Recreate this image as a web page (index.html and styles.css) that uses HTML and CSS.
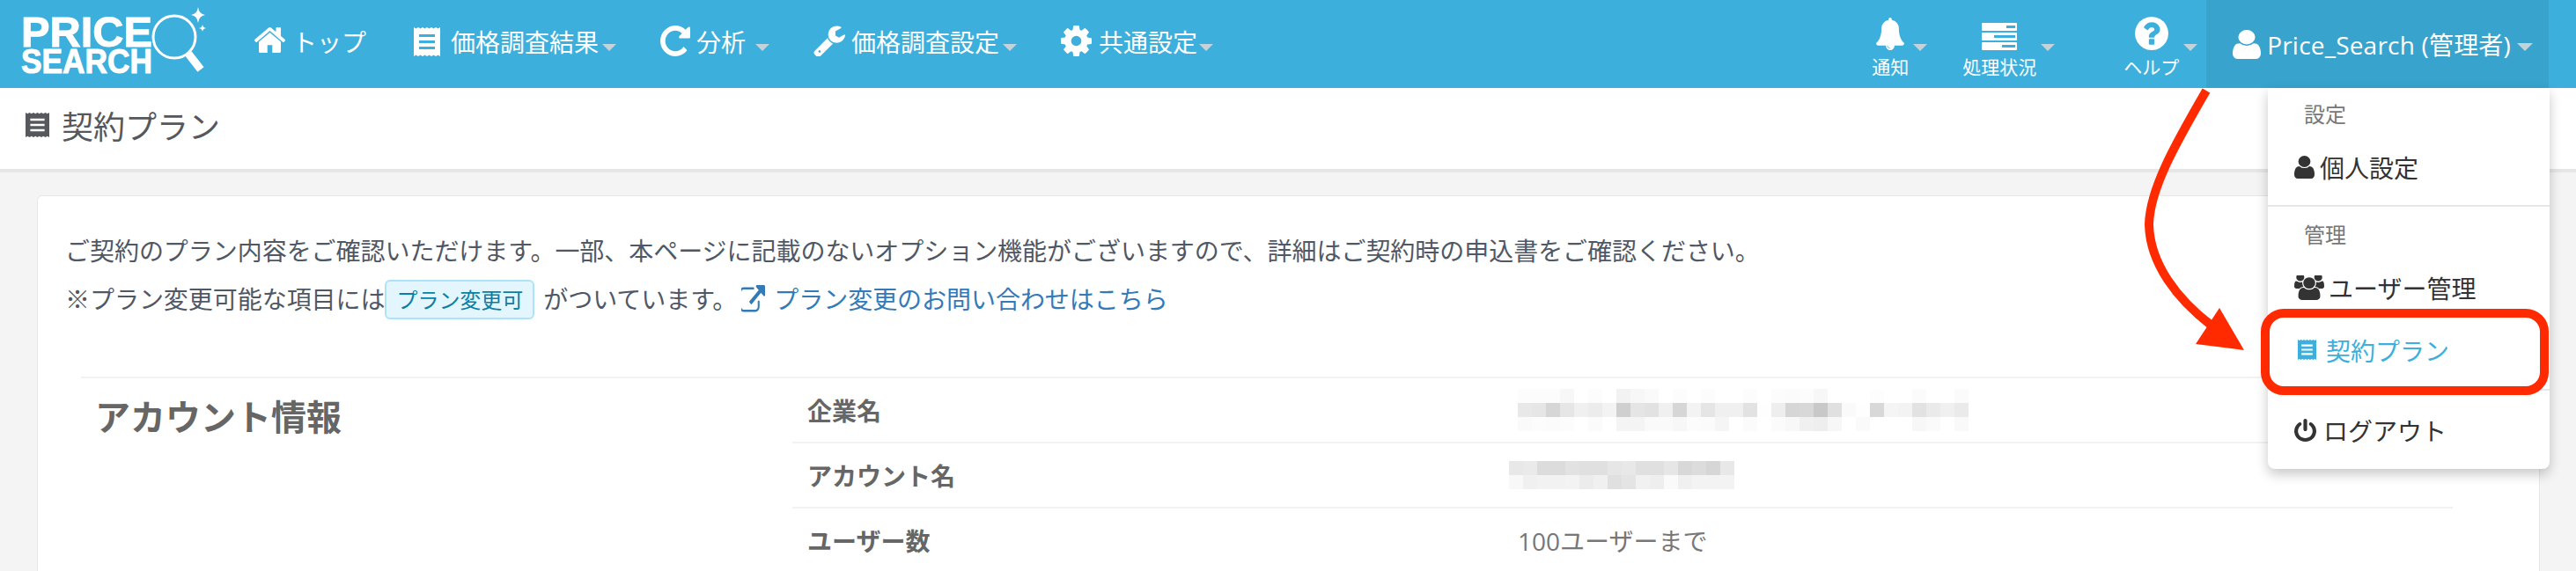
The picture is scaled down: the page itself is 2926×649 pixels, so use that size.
FILE: index.html
```html
<!DOCTYPE html>
<html lang="ja">
<head>
    <meta charset="UTF-8">
    <title>契約プラン</title>
    <link rel="stylesheet" href="styles.css">
</head>
<body>
    <svg class="icon-defs" aria-hidden="true">
        <symbol id="i-home" viewBox="90 250 1610 1290" preserveAspectRatio="none"><path d="M1472 992v480q0 26-19 45t-45 19h-384v-384h-256v384h-384q-26 0-45-19t-19-45v-480q0-1 .5-3t.5-3l575-474 575 474q1 2 1 6zm223-69l-62 74q-8 9-21 11h-3q-13 0-21-7l-692-577-692 577q-12 8-24 7-13-2-21-11l-62-74q-8-10-7-23.5t11-21.5l719-599q32-26 76-26t76 26l244 204v-195q0-14 9-23t23-9h192q14 0 23 9t9 23v408l219 182q10 8 11 21.5t-7 23.5z"/></symbol>
        <symbol id="i-repeat" viewBox="128 128 1536 1536" preserveAspectRatio="none"><path d="M1664 256v448q0 26-19 45t-45 19h-448q-42 0-59-40-17-39 14-69l138-138q-148-137-349-137-104 0-198.5 40.5t-163.5 109.5-109.5 163.5-40.5 198.5 40.5 198.5 109.5 163.5 163.5 109.5 198.5 40.5q119 0 225-52t179-147q7-10 23-12 15 0 25 9l137 138q9 8 9.5 20.5t-7.5 22.5q-109 132-264 204.5t-327 72.5q-156 0-298-61t-245-164-164-245-61-298 61-298 164-245 245-164 298-61q147 0 284.5 55.5t244.5 156.5l130-129q29-31 70-14 39 17 39 59z"/></symbol>
        <symbol id="i-wrench" viewBox="64 64 1664 1664" preserveAspectRatio="none"><path d="M448 1472q0-26-19-45t-45-19-45 19-19 45 19 45 45 19 45-19 19-45zm644-420l-682 682q-37 37-90 37-52 0-91-37l-106-108q-38-36-38-90 0-53 38-91l681-681q39 98 114.5 173.5t173.5 114.5zm634-435q0 39-23 106-47 134-164.5 217.5t-258.5 83.5q-185 0-316.5-131.5t-131.5-316.5 131.5-316.5 316.5-131.5q58 0 121.5 16.5t107.5 46.5q16 11 16 28t-16 28l-293 169v224l193 107q5-3 79-48.5t135.5-81 70.5-35.5q15 0 23.5 10t8.5 25z"/></symbol>
        <symbol id="i-cog" viewBox="128 128 1536 1536" preserveAspectRatio="none"><path d="M1152 896q0-106-75-181t-181-75-181 75-75 181 75 181 181 75 181-75 75-181zm512-109v222q0 12-8 23t-20 13l-185 28q-19 54-39 91 35 50 107 138 10 12 10 25t-9 23q-27 37-99 108t-94 71q-12 0-26-9l-138-108q-44 23-91 38-16 136-29 186-7 28-36 28h-222q-14 0-24.5-8.5t-11.5-21.5l-28-184q-49-16-90-37l-141 107q-10 9-25 9-14 0-25-11-126-114-165-168-7-10-7-23 0-12 8-23 15-21 51-66.5t54-70.5q-27-50-41-99l-183-27q-13-2-21-12.5t-8-23.5v-222q0-12 8-23t19-13l186-28q14-46 39-92-40-57-107-138-10-12-10-24 0-10 9-23 26-36 98.5-107.5t94.5-71.5q13 0 26 10l138 107q44-23 91-38 16-136 29-186 7-28 36-28h222q14 0 24.5 8.5t11.5 21.5l28 184q49 16 90 37l142-107q9-9 24-9 13 0 25 10 129 119 165 170 7 8 7 22 0 12-8 23-15 21-51 66.5t-54 70.5q26 50 41 98l183 28q13 2 21 12.5t8 23.5z"/></symbol>
        <symbol id="i-bell" viewBox="64 0 1664 1792" preserveAspectRatio="none"><path d="M912 1696q0-16-16-16-59 0-101.5-42.5t-42.5-101.5q0-16-16-16t-16 16q0 73 51.5 124.5t124.5 51.5q16 0 16-16zm816-288q0 52-38 90t-90 38h-448q0 106-75 181t-181 75-181-75-75-181h-448q-52 0-90-38t-38-90q50-42 91-88t85-119.5 74.5-158.5 50-206 19.5-260q0-152 117-282.5t307-158.5q-8-19-8-39 0-40 28-68t68-28 68 28 28 68q0 20-8 39 190 28 307 158.5t117 282.5q0 139 19.5 260t50 206 74.5 158.5 85 119.5 91 88z"/></symbol>
        <symbol id="i-server" viewBox="0 0 40 31" preserveAspectRatio="none"><path fill-rule="evenodd" d="M1 0h38a1 1 0 0 1 1 1v7a1 1 0 0 1-1 1H1a1 1 0 0 1-1-1V1a1 1 0 0 1 1-1zm27 3v3h10V3zM1 11h38a1 1 0 0 1 1 1v7a1 1 0 0 1-1 1H1a1 1 0 0 1-1-1v-7a1 1 0 0 1 1-1zm13 3v3h24v-3zM1 22h38a1 1 0 0 1 1 1v7a1 1 0 0 1-1 1H1a1 1 0 0 1-1-1v-7a1 1 0 0 1 1-1zm22 3v3h15v-3z"/></symbol>
        <symbol id="i-question" viewBox="128 128 1536 1536" preserveAspectRatio="none"><path d="M1024 1376v-192q0-14-9-23t-23-9h-192q-14 0-23 9t-9 23v192q0 14 9 23t23 9h192q14 0 23-9t9-23zm256-672q0-88-55.5-163t-138.5-116-170-41q-243 0-371 213-15 24 8 42l132 100q7 6 19 6 16 0 25-12 53-68 86-92 34-24 86-24 48 0 85.5 26t37.5 59q0 38-20 61t-68 45q-63 28-115.5 86.5t-52.5 125.5v36q0 14 9 23t23 9h192q14 0 23-9t9-23q0-19 21.5-49.5t54.5-49.5q32-18 49-28.5t46-35 44.5-48 28-60.5 12.5-81zm384 192q0 209-103 385.5t-279.5 279.5-385.5 103-385.5-103-279.5-279.5-103-385.5 103-385.5 279.5-279.5 385.5-103 385.5 103 279.5 279.5 103 385.5z"/></symbol>
        <symbol id="i-user" viewBox="256 128 1280 1536" preserveAspectRatio="none"><path d="M1536 1399q0 109-62.5 187t-150.5 78h-854q-88 0-150.5-78t-62.5-187q0-85 8.5-160.5t31.5-152 58.5-131 94-89 134.5-34.5q131 128 313 128t313-128q76 0 134.5 34.5t94 89 58.5 131 31.5 152 8.5 160.5zm-256-887q0 159-112.5 271.5t-271.5 112.5-271.5-112.5-112.5-271.5 112.5-271.5 271.5-112.5 271.5 112.5 112.5 271.5z"/></symbol>
        <symbol id="i-users" viewBox="0 128 1920 1664" preserveAspectRatio="none"><path d="M593 896q-162 5-265 128h-134q-82 0-138-40.5t-56-118.5q0-353 124-353 6 0 43.5 21t97.5 42.5 119 21.5q67 0 133-23-5 37-5 66 0 139 81 256zm1071 637q0 120-73 189.5t-194 69.5h-874q-121 0-194-69.5t-73-189.5q0-53 3.5-103.5t14-109 26.5-108.5 43-97.5 62-81 85.5-53.5 111.5-20q10 0 43 21.5t73 48 107 48 135 21.5 135-21.5 107-48 73-48 43-21.5q61 0 111.5 20t85.5 53.5 62 81 43 97.5 26.5 108.5 14 109 3.5 103.5zm-1024-1277q0 106-75 181t-181 75-181-75-75-181 75-181 181-75 181 75 75 181zm704 384q0 159-112.5 271.5t-271.5 112.5-271.5-112.5-112.5-271.5 112.5-271.5 271.5-112.5 271.5 112.5 112.5 271.5zm576 225q0 78-56 118.5t-138 40.5h-134q-103-123-265-128 81-117 81-256 0-29-5-66 66 23 133 23 59 0 119-21.5t97.5-42.5 43.5-21q124 0 124 353zm-128-609q0 106-75 181t-181 75-181-75-75-181 75-181 181-75 181 75 75 181z"/></symbol>
        <symbol id="i-power" viewBox="128 0 1536 1664" preserveAspectRatio="none"><path d="M1664 896q0 156-61 298t-164 245-245 164-298 61-298-61-245-164-164-245-61-298q0-182 80.5-343t226.5-270q43-32 95.5-25t83.5 50q32 42 24.5 94.5t-49.5 84.5q-98 74-151.5 181t-53.5 228q0 104 40.5 198.5t109.5 163.5 163.5 109.5 198.5 40.5 198.5-40.5 163.5-109.5 109.5-163.5 40.5-198.5q0-121-53.5-228t-151.5-181q-42-32-49.5-84.5t24.5-94.5q31-43 84-50t95 25q146 109 226.5 270t80.5 343zm-640-768v640q0 52-38 90t-90 38-90-38-38-90v-640q0-52 38-90t90-38 90 38 38 90z"/></symbol>
        <symbol id="i-external" viewBox="128 0 1664 1664" preserveAspectRatio="none"><path d="M1408 928v320q0 119-84.5 203.5t-203.5 84.5h-832q-119 0-203.5-84.5t-84.5-203.5v-832q0-119 84.5-203.5t203.5-84.5h704q14 0 23 9t9 23v64q0 14-9 23t-23 9h-704q-66 0-113 47t-47 113v832q0 66 47 113t113 47h832q66 0 113-47t47-113v-320q0-14 9-23t23-9h64q14 0 23 9t9 23zm384-864v512q0 26-19 45t-45 19-45-19l-176-176-652 652q-10 10-23 10t-23-10l-114-114q-10-10-10-23t10-23l652-652-176-176q-19-19-19-45t19-45 45-19h512q26 0 45 19t19 45z"/></symbol>
        <symbol id="i-receipt" viewBox="0 0 30 33" preserveAspectRatio="none"><path fill-rule="evenodd" d="M0 0l2.500 1.500L5 0l2.500 1.500L10 0l2.500 1.500L15 0l2.500 1.500L20 0l2.500 1.500L25 0l2.500 1.500L30 0v33l-2.500-1.500L25 33l-2.500-1.500L20 33l-2.500-1.500L15 33l-2.500-1.500L10 33l-2.500-1.500L5 33l-2.500-1.500L0 33zM6 8v3h18V8zm0 7v3h18v-3zm0 7v3h18v-3z"/></symbol>
    </svg>

    <header class="navbar">
        <a class="logo">
            <svg width="211" height="86" viewBox="0 0 211 86">
                <text class="logo-price" x="0" y="45" textLength="149" lengthAdjust="spacingAndGlyphs">PRICE</text>
                <text class="logo-search" x="0" y="75" textLength="149" lengthAdjust="spacingAndGlyphs">SEARCH</text>
                <circle cx="174" cy="34" r="24" fill="#3dafdc" stroke="#fff" stroke-width="3"/>
                <path d="M190 53L204 71" stroke="#fff" stroke-width="9" fill="none"/>
                <path d="M201 0q1 8 8 9q-7 1-8 9q-1-8-8-9q7-1 8-9zM206 20q.5 3.500 4 4q-3.500 .5-4 4q-.5-3.500-4-4q3.500-.5 4-4z" fill="#fff"/>
            </svg>
        </a>

        <nav class="nav-left">
            <a class="nav-item nav-top"><svg class="icon home"><use href="#i-home"/></svg>トップ</a>
            <a class="nav-item"><svg class="icon receipt"><use href="#i-receipt"/></svg>価格調査結果<span class="caret"></span></a>
            <a class="nav-item"><svg class="icon repeat"><use href="#i-repeat"/></svg>分析<span class="caret caret-far"></span></a>
            <a class="nav-item"><svg class="icon wrench"><use href="#i-wrench"/></svg>価格調査設定<span class="caret"></span></a>
            <a class="nav-item"><svg class="icon cog"><use href="#i-cog"/></svg>共通設定<span class="caret caret-near"></span></a>
        </nav>

        <nav class="nav-right">
            <a class="nav-stack bell-item">
                <span class="stack-col"><svg class="bell"><use href="#i-bell"/></svg><span>通知</span></span>
                <span class="caret"></span>
            </a>
            <a class="nav-stack status-item">
                <span class="stack-col"><svg class="server"><use href="#i-server"/></svg><span>処理状況</span></span>
                <span class="caret"></span>
            </a>
            <a class="nav-stack help-item">
                <span class="stack-col"><svg class="question"><use href="#i-question"/></svg><span>ヘルプ</span></span>
                <span class="caret"></span>
            </a>
            <a class="nav-user">
                <svg class="user"><use href="#i-user"/></svg><span class="user-name">Price_Search (管理者)</span><span class="caret"></span>
            </a>
        </nav>
    </header>

    <div class="page-title">
        <svg class="title-icon"><use href="#i-receipt"/></svg>
        <h1>契約プラン</h1>
    </div>

    <main class="card">
        <p class="lead">ご契約のプラン内容をご確認いただけます。一部、本ページに記載のないオプション機能がございますので、詳細はご契約時の申込書をご確認ください。</p>
        <p class="lead lead-note">※プラン変更可能な項目には<span class="badge">プラン変更可</span><span class="note-after">がついています。</span><a class="contact-link"><svg class="external"><use href="#i-external"/></svg>プラン変更のお問い合わせはこちら</a></p>

        <section class="info">
            <h2>アカウント情報</h2>
            <div class="rows">
                <div class="row">
                    <div class="label">企業名</div>
                    <div class="value"><div class="mosaic" data-cols="32" data-shades="fc fc fc f7 ff fc ff f2 f7 fa ff fc ff fc ff ff fc ff fc fb fc f7 ff ff ff fd ff ff fb ff ff fb e8 e6 d6 e6 f0 ec f3 cf e5 e2 f0 d6 f3 e5 f0 f0 e2 fe ee d6 d8 c8 e0 fa fe d8 f5 f3 e2 ea f0 ea fa fc fb fc ff fb ff f4 f4 fa fa f7 fc fb f5 ff fb ff fb f8 f0 ee f7 ff fa ff ff ff f7 fa ff f9"></div></div>
                </div>
                <div class="row">
                    <div class="label">アカウント名</div>
                    <div class="value"><div class="mosaic mosaic-name" data-cols="16" data-shades="e8 ea dc dc e2 e0 e0 e6 e8 e0 e0 e6 d8 dc d6 e8 f8 f0 f2 f2 f3 ec f0 e0 e4 f1 ee fa f0 f3 f3 f3"></div></div>
                </div>
                <div class="row">
                    <div class="label">ユーザー数</div>
                    <div class="value">100ユーザーまで</div>
                </div>
            </div>
        </section>
    </main>

    <!-- user menu, opened -->
    <div class="dropdown">
        <div class="menu-group">
            <div class="menu-head">設定</div>
            <a class="menu-item"><svg class="m-user"><use href="#i-user"/></svg>個人設定</a>
        </div>
        <div class="menu-group">
            <div class="menu-head">管理</div>
            <a class="menu-item"><svg class="m-users"><use href="#i-users"/></svg>ユーザー管理</a>
            <a class="menu-item menu-active"><svg class="m-receipt"><use href="#i-receipt"/></svg>契約プラン</a>
        </div>
        <div class="menu-group">
            <a class="menu-item"><svg class="m-power"><use href="#i-power"/></svg>ログアウト</a>
        </div>
    </div>

    <!-- red annotation drawn over the screenshot -->
    <div class="mark-box"></div>
    <svg class="mark-arrow" width="160" height="320" viewBox="2420 100 160 320">
        <path d="M2506 103C2470 165 2442 215 2441 255C2442 300 2473 340 2512 370" fill="none" stroke="#ff2a00" stroke-width="10"/>
        <path d="M2521 350L2549 398L2494 391z" fill="#ff2a00"/>
    </svg>

    <script src="script.js"></script>
</body>
</html>
```

FILE: styles.css
```css
* {
    box-sizing: border-box;
    margin: 0;
    padding: 0;
}

html, body {
    height: 100%;
    overflow: hidden;
}

body {
    position: relative;
    background-color: #f4f4f4;
    font-family: 'Open Sans', 'Noto Sans CJK JP', sans-serif;
    font-size: 28px;
    color: #555;
}

svg {
    display: block;
    flex: none;
    fill: currentColor;
}

.icon-defs {
    position: absolute;
    width: 0;
    height: 0;
}

/* top bar */
.navbar {
    display: flex;
    height: 100px;
    background-color: #3dafdc;
    color: #fff;
}

.logo {
    margin: 8px 0 0 24px;
    width: 211px;
}

.logo-price,
.logo-search {
    font-family: 'Liberation Sans', sans-serif;
    font-weight: 700;
    fill: #fff;
    stroke: #fff;
    stroke-width: 1;
}

.logo-price {
    font-size: 49px;
}

.logo-search {
    font-size: 38px;
}

.nav-left {
    display: flex;
    margin-left: 29px;
}

.nav-item {
    display: flex;
    align-items: center;
    height: 94px;
    padding: 0 25px;
    white-space: nowrap;
}

.nav-top {
    padding-right: 29px;
}

.icon {
    margin-right: 8px;
}

.home {
    width: 35px;
    height: 29px;
    margin-right: 8px;
    margin-top: -4px;
}

.receipt {
    width: 30px;
    height: 33px;
    margin-right: 12px;
}

.repeat {
    width: 34px;
    height: 35px;
    margin-right: 7px;
    margin-top: -2px;
}

.wrench {
    width: 36px;
    height: 36px;
    margin-right: 7px;
    margin-top: -2px;
}

.cog {
    width: 35px;
    height: 35px;
    margin-right: 8px;
    margin-top: -2px;
}

.caret {
    flex: none;
    width: 0;
    height: 0;
    margin: 14px 0 0 4px;
    border-top: 8px solid #c4d3da;
    border-left: 8px solid transparent;
    border-right: 8px solid transparent;
}

.caret-far {
    margin-left: 11px;
}

.caret-near {
    margin-left: 2px;
}

.nav-right {
    display: flex;
    margin-left: auto;
    margin-right: 31px;
}

.nav-stack {
    display: flex;
    font-size: 21px;
}

.nav-stack .caret {
    margin: 50px 0 0 5px;
}

.stack-col {
    display: flex;
    flex-direction: column;
    align-items: center;
    justify-content: flex-end;
    height: 90px;
    line-height: 28px;
}

.stack-col svg {
    margin-bottom: 5px;
}

.bell-item {
    margin-right: 40px;
}

.status-item {
    margin-right: 78px;
}

.help-item {
    margin-right: 10px;
}

.bell {
    width: 32px;
    height: 37px;
}

.server {
    width: 40px;
    height: 31px;
    margin-bottom: 8px;
}

.question {
    width: 38px;
    height: 38px;
}

.nav-user {
    display: flex;
    align-items: center;
    padding: 0 18px 0 30px;
    background-color: #38a3cd;
    white-space: nowrap;
}

.user {
    width: 32px;
    height: 33px;
    margin-right: 7px;
}

.user-name {
    letter-spacing: 0.2px;
}

.nav-user .caret {
    margin-left: 7px;
    margin-top: 6px;
    border-top-width: 9px;
    border-left-width: 9px;
    border-right-width: 9px;
}

/* page title */
.page-title {
    display: flex;
    align-items: center;
    height: 96px;
    padding: 0 0 8px 29px;
    background-color: #fff;
    border-bottom: 4px solid #e6e6e6;
    color: #55585d;
}

.title-icon {
    width: 27px;
    height: 28px;
    margin-right: 14px;
}

.page-title h1 {
    font-size: 36px;
    font-weight: 400;
}

/* content card, runs on below the window */
.card {
    margin: 26px 41px 0 42px;
    padding: 42px 32px 0 31px;
    height: 427px;
    background-color: #fff;
    border: 1px solid #e7e7e7;
    border-bottom: none;
    border-radius: 6px 6px 0 0;
}

.lead {
    height: 40px;
    line-height: 40px;
    margin-bottom: 15px;
    color: #505866;
    white-space: nowrap;
    letter-spacing: -0.04px;
}

.lead-note {
    display: flex;
    align-items: center;
}

.badge {
    display: block;
    margin: 0 10px 0 0;
    padding: 0 11px;
    height: 45px;
    line-height: 41px;
    font-size: 24px;
    color: #0a7fa6;
    background-color: #e3f6fd;
    border: 2px solid #aee3f7;
    border-radius: 6px;
}

.note-after {
    margin-right: 5px;
}

.contact-link {
    display: flex;
    align-items: center;
    color: #337ab7;
}

.external {
    width: 27px;
    height: 33px;
    margin-right: 10px;
}

.info {
    display: grid;
    grid-template-columns: 808px 1fr;
    margin: 68px 66px 0 18px;
    border-top: 2px solid #f2f2f2;
}

.info h2 {
    padding: 14px 0 0 16px;
    font-size: 40px;
    line-height: 60px;
    font-weight: 700;
    color: #666;
}

.row {
    display: grid;
    grid-template-columns: 807px 1fr;
    align-items: center;
    height: 74px;
    border-bottom: 2px solid #f2f2f2;
    padding-left: 17px;
}

.row:last-child {
    height: 72px;
    border-bottom: none;
}

.label {
    font-weight: 700;
    color: #666;
}

.value {
    color: #777;
}

.mosaic {
    display: grid;
    grid-auto-rows: 16px;
    width: 512px;
}

.mosaic-name {
    width: 256px;
    margin-left: -10px;
}

/* open user menu */
.dropdown {
    position: absolute;
    top: 100px;
    left: 2576px;
    width: 320px;
    height: 433px;
    background-color: #fff;
    border-radius: 0 0 8px 8px;
    box-shadow: 0 6px 14px rgba(0,0,0,0.22);
    color: #333;
}

.menu-group {
    padding-top: 9px;
    border-bottom: 2px solid #e7e7e7;
}

.menu-group:last-child {
    border-bottom: none;
}

.menu-group:first-child {
    height: 135px;
    padding-top: 10px;
}

.menu-group:nth-child(2) {
    height: 209px;
    padding-top: 12px;
}

.menu-head {
    padding-left: 41px;
    height: 40px;
    margin-bottom: 4px;
    line-height: 40px;
    font-size: 24px;
    color: #777;
}

.menu-item {
    display: flex;
    align-items: center;
    height: 71px;
    padding-left: 30px;
    white-space: nowrap;
}

.menu-active {
    color: #3dafdc;
}

.m-user {
    width: 23px;
    height: 26px;
    margin-right: 6px;
}

.m-users {
    width: 34px;
    height: 28px;
    margin-right: 5px;
}

.m-receipt {
    width: 21px;
    height: 23px;
    margin: 0 11px 0 4px;
}

.m-power {
    width: 25px;
    height: 26px;
    margin-right: 8px;
}

/* red annotation */
.mark-box {
    position: absolute;
    left: 2568px;
    top: 351px;
    width: 327px;
    height: 98px;
    border: 10px solid #ff2a00;
    border-radius: 26px;
}

.mark-arrow {
    position: absolute;
    left: 2420px;
    top: 100px;
}
```

FILE: script.js
```js
// the blurred-out account values: grey cells from a list of shades
document.querySelectorAll('.mosaic').forEach(mosaic => {
    mosaic.style.gridTemplateColumns = `repeat(${mosaic.dataset.cols}, 16px)`;
    mosaic.dataset.shades.split(' ').forEach(shade => {
        const cell = document.createElement('div');
        cell.style.backgroundColor = `#${shade}${shade}${shade}`;
        mosaic.appendChild(cell);
    });
});
```
